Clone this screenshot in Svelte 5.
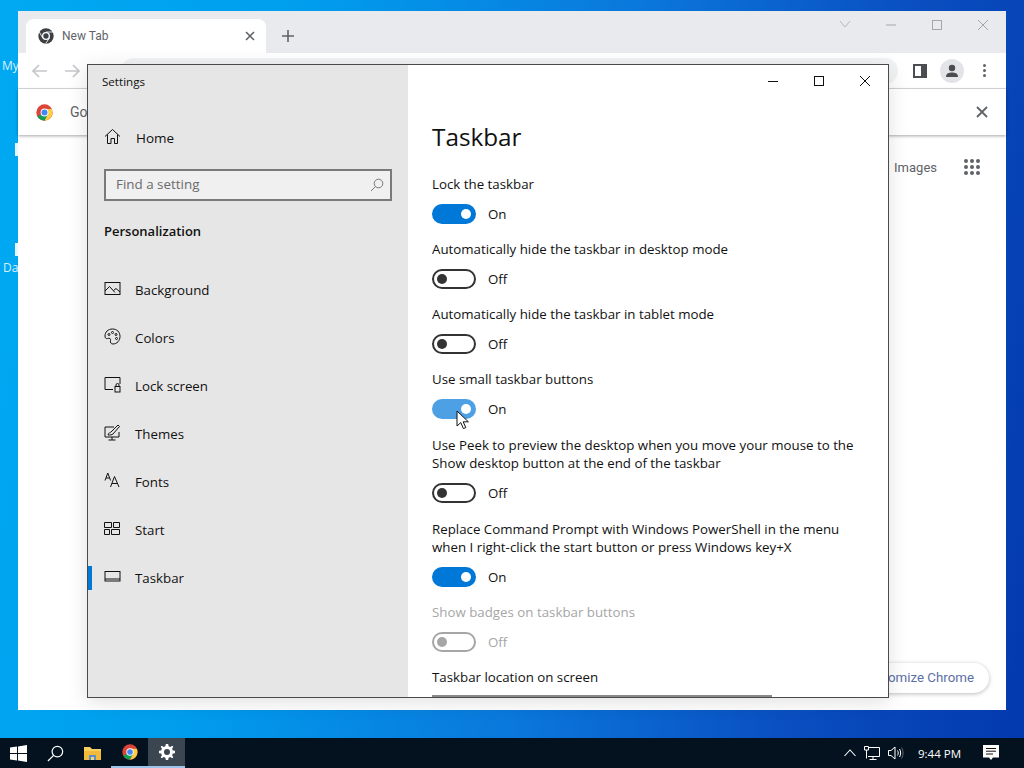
<script>
  const nav = [
    { label: 'Background', icon: 'bg' },
    { label: 'Colors', icon: 'colors' },
    { label: 'Lock screen', icon: 'lock' },
    { label: 'Themes', icon: 'themes' },
    { label: 'Fonts', icon: 'fonts' },
    { label: 'Start', icon: 'start' },
    { label: 'Taskbar', icon: 'taskbar', active: true }
  ];

  const options = [
    { label: 'Lock the taskbar', on: true },
    { label: 'Automatically hide the taskbar in desktop mode', on: false },
    { label: 'Automatically hide the taskbar in tablet mode', on: false },
    { label: 'Use small taskbar buttons', on: true, hover: true },
    { label: 'Use Peek to preview the desktop when you move your mouse to the Show desktop button at the end of the taskbar', on: false, wide: true },
    { label: 'Replace Command Prompt with Windows PowerShell in the menu when I right-click the start button or press Windows key+X', on: true },
    { label: 'Show badges on taskbar buttons', on: false, disabled: true }
  ];
</script>

{#snippet chromeLogo(size)}
  <svg width={size} height={size} viewBox="0 0 48 48">
    <circle cx="24" cy="24" r="23" fill="#db4437" />
    <path d="M24 24 L4 35.5 A23 23 0 0 0 24 47 L36 27 Z" fill="#0f9d58" />
    <path d="M24 14 H44 A23 23 0 0 1 24 47 L34 29 Z" fill="#ffcd40" />
    <circle cx="24" cy="24" r="11" fill="#fff" />
    <circle cx="24" cy="24" r="8.5" fill="#4285f4" />
  </svg>
{/snippet}

<div class="desktop">
  <span class="desk-label my">My</span>
  <span class="desk-label da">Da</span>
  <i class="desk-mark one"></i>
  <i class="desk-mark two"></i>

  <!-- browser behind -->
  <section class="chrome">
    <div class="tabstrip">
      <div class="tab">
        <svg class="favicon" width="16" height="16" viewBox="0 0 48 48">
          <circle cx="24" cy="24" r="23" fill="#3c4043" />
          <circle cx="24" cy="24" r="12" fill="#fff" />
          <circle cx="24" cy="24" r="8" fill="#3c4043" />
          <path d="M24 12 H45 M14 30 L4 12 M34 30 L23 47" stroke="#fff" stroke-width="2.5" />
        </svg>
        <span class="tab-title">New Tab</span>
        <svg class="tab-close" width="10" height="10" viewBox="0 0 10 10"><path d="M1 1 L9 9 M9 1 L1 9" stroke="#5f6368" stroke-width="1.6" /></svg>
      </div>
      <svg class="new-tab" width="14" height="14" viewBox="0 0 14 14"><path d="M7 1 V13 M1 7 H13" stroke="#5f6368" stroke-width="1.6" /></svg>
      <div class="chrome-controls">
        <svg width="46" height="14" viewBox="0 0 46 14"><path d="M18 3 L23 9 L28 3" fill="none" stroke="#b4b6b9" /></svg>
        <svg width="46" height="14" viewBox="0 0 46 14"><path d="M18 7 H28" stroke="#a4a6a9" /></svg>
        <svg width="46" height="14" viewBox="0 0 46 14"><rect x="18.5" y="2.5" width="9" height="9" fill="none" stroke="#a4a6a9" /></svg>
        <svg width="46" height="14" viewBox="0 0 46 14"><path d="M18 2 L28 12 M28 2 L18 12" stroke="#a4a6a9" /></svg>
      </div>
    </div>
    <div class="toolbar">
      <svg width="18" height="16" viewBox="0 0 18 16"><path d="M16 8 H2 M8 2 L2 8 L8 14" fill="none" stroke="#c4c6c9" stroke-width="1.7" /></svg>
      <svg width="18" height="16" viewBox="0 0 18 16"><path d="M2 8 H16 M10 2 L16 8 L10 14" fill="none" stroke="#c4c6c9" stroke-width="1.7" /></svg>
      <div class="omnibox"></div>
      <svg class="panel-icon" width="14" height="14" viewBox="0 0 14 14"><path d="M0 0 H14 V14 H0 Z M2 2 V12 H8 V2 Z" fill="#4b4d50" fill-rule="evenodd" /></svg>
      <div class="avatar">
        <svg width="14" height="14" viewBox="0 0 14 14"><circle cx="7" cy="4" r="3.2" fill="#494c50" /><path d="M1 13 C1 9 4 8.4 7 8.4 C10 8.4 13 9 13 13 Z" fill="#494c50" /></svg>
      </div>
      <div class="dots"><i></i><i></i><i></i></div>
    </div>
    <div class="infobar">
      {@render chromeLogo(17)}
      <span class="info-text">Go</span>
      <svg class="info-close" width="12" height="12" viewBox="0 0 12 12"><path d="M1 1 L11 11 M11 1 L1 11" stroke="#5f6368" stroke-width="1.8" /></svg>
    </div>
    <div class="ntp">
      <div class="ntp-top">
        <span class="images">Images</span>
        <div class="apps">
          {#each Array(9) as _}<i></i>{/each}
        </div>
      </div>
      <div class="customize">Customize Chrome</div>
    </div>
  </section>

  <!-- settings window -->
  <section class="settings">
    <aside class="sidebar">
      <div class="win-title">Settings</div>
      <div class="home">
        <svg class="nav-icon" width="17" height="17" viewBox="0 0 17 17" fill="none" stroke="#111"><path d="M1 8.5 L8.5 1.5 L16 8.5 M3.5 6.5 V15.5 H7 V10.5 H10.5 V15.5 H13.5 V6.5" /></svg>
        <span>Home</span>
      </div>
      <div class="search">
        <span>Find a setting</span>
        <svg width="14" height="14" viewBox="0 0 14 14" fill="none" stroke="#777"><circle cx="8.5" cy="5.5" r="4.3" /><path d="M5.5 8.5 L1 13" /></svg>
      </div>
      <h2>Personalization</h2>
      <nav>
        {#each nav as item}
          <div class="nav-item" class:active={item.active}>
            <svg class="nav-icon" width="17" height="17" viewBox="0 0 17 17" fill="none" stroke="#111">
              {#if item.icon === 'bg'}
                <rect x="1" y="2.5" width="15" height="12" />
                <path d="M1 11 L5.5 6.5 L11 12.5 M9.5 10.5 L12 8.5 L16 12" />
              {:else if item.icon === 'colors'}
                <path d="M8.5 1 C4 1 1 4 1 8 C1 10 2 11 3.5 10.5 C5.5 9.8 7 10.5 6.5 12.5 C6 14.5 7 16 9 16 C13 16 16 12.5 16 8.5 C16 4 13 1 8.5 1 Z" />
                <circle cx="5" cy="6.5" r="1" /><circle cx="8.5" cy="4.5" r="1" /><circle cx="12" cy="6.5" r="1" /><circle cx="12.5" cy="10.5" r="1" />
              {:else if item.icon === 'lock'}
                <path d="M9 13.5 H1 V1.5 H16 V8" />
                <rect x="11" y="10.5" width="5" height="5.5" />
                <path d="M12 10.5 V9 A1.5 1.5 0 0 1 15 9 V10.5" />
              {:else if item.icon === 'themes'}
                <path d="M10 3 H1 V13 H15 V8 M8 13 V16 M4.5 16 H11.5" />
                <path d="M4 11 C5 8 6 9 7 8 L14 1 L15.5 2.5 L9 10 C8 11 6 11 4 11 Z" />
              {:else if item.icon === 'fonts'}
                <path d="M1 8.5 L3.8 1 L6.6 8.5 M2 6 H5.6 M6.5 15 L10.5 4.5 L15 15 M8 11.5 H13.5" />
              {:else if item.icon === 'start'}
                <path d="M.5 2.5 H7.5 V7.5 H.5 Z M9.5 2.5 H15.5 V7.5 H9.5 Z M.5 9.5 H5.5 V14.5 H.5 Z M7.5 9.5 H15.5 V14.5 H7.5 Z" />
              {:else}
                <rect x="1" y="3.5" width="15" height="9.5" />
                <path d="M1 11 H16" />
              {/if}
            </svg>
            <span>{item.label}</span>
          </div>
        {/each}
      </nav>
    </aside>

    <main class="content">
      <div class="controls">
        <button aria-label="Minimize"><svg width="12" height="12" viewBox="0 0 12 12"><path d="M1 6.5 H11" stroke="#111" /></svg></button>
        <button aria-label="Maximize"><svg width="12" height="12" viewBox="0 0 12 12"><rect x="1.5" y="1.5" width="9" height="9" fill="none" stroke="#111" /></svg></button>
        <button aria-label="Close"><svg width="12" height="12" viewBox="0 0 12 12"><path d="M1 1 L11 11 M11 1 L1 11" stroke="#111" /></svg></button>
      </div>
      <h1>Taskbar</h1>
      {#each options as opt}
        <div class="option" class:disabled={opt.disabled} class:wide={opt.wide}>
          <p>{opt.label}</p>
          <div class="toggle-row">
            <span class="toggle" class:on={opt.on} class:hover={opt.hover}><i></i></span>
            <span class="state">{opt.on ? 'On' : 'Off'}</span>
            {#if opt.hover}
              <svg class="cursor" width="14" height="20" viewBox="0 0 14 20"><path d="M1 1 V16 L4.8 12.6 L7.4 18.6 L9.8 17.6 L7.2 11.8 H12.4 Z" fill="#fff" stroke="#111" /></svg>
            {/if}
          </div>
        </div>
      {/each}
      <p class="location">Taskbar location on screen</p>
      <div class="dropdown"></div>
    </main>
  </section>

  <footer class="taskbar">
    <div class="tb-item">
      <svg width="17" height="17" viewBox="0 0 17 17" fill="#fff"><path d="M0 2.6 L7 1.6 V8 H0 Z M8 1.4 L17 0 V8 H8 Z M0 9 H7 V15.4 L0 14.4 Z M8 9 H17 V17 L8 15.6 Z" /></svg>
    </div>
    <div class="tb-item">
      <svg width="17" height="17" viewBox="0 0 18 18" fill="none" stroke="#fff" stroke-width="1.3"><circle cx="11" cy="7" r="5.6" /><path d="M7 11 L1 17" /></svg>
    </div>
    <div class="tb-item">
      <svg width="17" height="15" viewBox="0 0 17 15"><path d="M0 1 H6 L8 3 H17 V14 H0 Z" fill="#f6cf5d" /><path d="M0 5 H17 V14 H0 Z" fill="#f2b93a" /><rect x="5" y="9" width="7" height="5" fill="#5c8fc4" /><rect x="7" y="11" width="3" height="3" fill="#f2d48a" /></svg>
    </div>
    <div class="tb-item running">{@render chromeLogo(16)}</div>
    <div class="tb-item running current">
      <svg width="16" height="16" viewBox="0 0 16 16"><path d="M6.8 0 H9.2 L9.6 2.2 L11.3 2.9 L13.2 1.7 L14.3 2.8 L13.1 4.7 L13.8 6.4 L16 6.8 V9.2 L13.8 9.6 L13.1 11.3 L14.3 13.2 L13.2 14.3 L11.3 13.1 L9.6 13.8 L9.2 16 H6.8 L6.4 13.8 L4.7 13.1 L2.8 14.3 L1.7 13.2 L2.9 11.3 L2.2 9.6 L0 9.2 V6.8 L2.2 6.4 L2.9 4.7 L1.7 2.8 L2.8 1.7 L4.7 2.9 L6.4 2.2 Z M8 5 A3 3 0 1 0 8 11 A3 3 0 1 0 8 5 Z" fill="#fff" fill-rule="evenodd" /></svg>
    </div>
    <div class="tray">
      <svg width="12" height="8" viewBox="0 0 12 8" fill="none" stroke="#fff" stroke-width="1.1"><path d="M.5 7 L6 1 L11.5 7" /></svg>
      <svg width="16" height="14" viewBox="0 0 16 14" fill="none" stroke="#fff"><path d="M4 1.5 H15.5 V10.5 H4 M9 10.5 V13 M5.5 13.5 H12.5 M.5 .5 H4.5 V4 H.5 Z M2.5 4 V12.5" /></svg>
      <svg width="16" height="14" viewBox="0 0 16 14" fill="none" stroke="#fff"><path d="M.5 4.5 H3 L7 1 V13 L3 9.5 H.5 Z M9.5 4.5 C10.5 6 10.5 8 9.5 9.5 M11.5 3 C13 5.5 13 8.5 11.5 11" /><path d="M13.5 1.5 C15.6 5 15.6 9 13.5 12.5" stroke="#666" /></svg>
      <span class="clock">9:44 PM</span>
      <svg class="notif" width="16" height="16" viewBox="0 0 16 16"><path d="M0 0 H16 V12.5 H10 L8 15 L6 12.5 H0 Z" fill="#fff" /><path d="M3 3.5 H13 M3 6.2 H13 M3 9 H10" stroke="#111" /></svg>
    </div>
  </footer>
</div>

<style>
  :global(body) {
    margin: 0;
    overflow: hidden;
  }
  .desktop {
    position: relative;
    width: 1024px;
    height: 768px;
    overflow: hidden;
    background: linear-gradient(100deg, #00a9f2 0%, #009fee 25%, #0a78dc 55%, #0a50c2 78%, #0338ae 100%);
    font-family: "Open Sans", "Noto Sans", sans-serif;
  }
  .desk-label {
    position: absolute;
    color: #d8f1ff;
    font-size: 12px;
    line-height: 14px;
  }
  .my { left: 2px; top: 59px; }
  .da { left: 3px; top: 261px; }
  .desk-mark {
    position: absolute;
    left: 15px;
    width: 3px;
    height: 13px;
    background: #e8f6ff;
  }
  .desk-mark.one { top: 143px; }
  .desk-mark.two { top: 243px; }

  /* chrome */
  .chrome {
    position: absolute;
    left: 18px;
    top: 11px;
    width: 988px;
    height: 699px;
    background: #fff;
    display: flex;
    flex-direction: column;
    font-family: Roboto, sans-serif;
  }
  .tabstrip {
    height: 42px;
    background: #e8eaed;
    display: flex;
    align-items: flex-end;
    padding-left: 8px;
  }
  .tab {
    width: 240px;
    height: 34px;
    box-sizing: border-box;
    background: #fff;
    border-radius: 8px 8px 0 0;
    display: flex;
    align-items: center;
    padding: 0 11px 0 12px;
    gap: 8px;
  }
  .favicon { flex: none; }
  .tab-title {
    flex: 1;
    font-size: 12px;
    color: #5f6368;
  }
  .new-tab {
    margin: 0 0 10px 15px;
  }
  .chrome-controls {
    margin-left: auto;
    align-self: flex-start;
    margin-top: 7px;
    display: flex;
  }
  .toolbar {
    height: 36px;
    box-sizing: border-box;
    border-bottom: 1px solid #dadce0;
    display: flex;
    align-items: center;
    padding-left: 13px;
    gap: 14px;
  }
  .omnibox {
    flex: 1;
    height: 26px;
    margin-left: 26px;
    margin-right: 1px;
    background: #f1f3f4;
    border-radius: 13px;
  }
  .panel-icon { margin-right: -1px; }
  .avatar {
    width: 24px;
    height: 24px;
    border-radius: 50%;
    background: #e3e4e8;
    display: flex;
    align-items: center;
    justify-content: center;
  }
  .dots {
    display: flex;
    flex-direction: column;
    gap: 2px;
    margin: 0 18px 0 3px;
    padding: 0 2px;
  }
  .dots i {
    width: 3px;
    height: 3px;
    border-radius: 50%;
    background: #5f6368;
  }
  .infobar {
    height: 46px;
    box-sizing: border-box;
    background: #fff;
    display: flex;
    align-items: center;
    padding: 0 18px;
    box-shadow: 0 1px 3px rgba(0, 0, 0, 0.35);
    position: relative;
  }
  .info-text {
    margin-left: 17px;
    font-size: 14px;
    color: #5f6368;
  }
  .info-close { margin-left: auto; }
  .ntp {
    flex: 1;
    display: flex;
    flex-direction: column;
    align-items: flex-end;
    justify-content: space-between;
    padding: 24px 17px 17px 0;
  }
  .ntp-top {
    display: flex;
    align-items: center;
    gap: 27px;
    padding-right: 9px;
  }
  .images {
    font-size: 13px;
    color: #5f6368;
  }
  .apps {
    display: grid;
    grid-template-columns: repeat(3, 4px);
    gap: 2px;
  }
  .apps i {
    width: 4px;
    height: 4px;
    border-radius: 50%;
    background: #5f6368;
  }
  .customize {
    height: 30px;
    line-height: 30px;
    padding: 0 15px;
    background: #fff;
    border-radius: 15px;
    box-shadow: 0 1px 4px rgba(60, 64, 67, 0.35);
    font-size: 13.3px;
    color: #5b6fa6;
    white-space: nowrap;
  }

  /* settings */
  .settings {
    position: absolute;
    left: 87px;
    top: 64px;
    width: 802px;
    height: 634px;
    box-sizing: border-box;
    border: 1px solid #4a4a4a;
    background: #fff;
    display: flex;
    overflow: hidden;
    color: #111;
    font-size: 13.3px;
    box-shadow: 0 4px 20px rgba(0, 0, 0, 0.12);
  }
  .sidebar {
    width: 320px;
    flex: none;
    background: #e6e6e6;
    box-sizing: border-box;
    padding: 0 16px;
  }
  .win-title {
    margin: 8px 0 0 -2px;
    font-size: 11.6px;
    line-height: 18px;
  }
  .home {
    display: flex;
    align-items: center;
    gap: 15px;
    height: 20px;
    margin-top: 37px;
    font-size: 13.5px;
  }
  .search {
    margin-top: 21px;
    height: 32px;
    box-sizing: border-box;
    border: 2px solid #7a7a7a;
    background: #f0f0f0;
    display: flex;
    align-items: center;
    justify-content: space-between;
    padding: 0 6px 2px 10px;
    color: #6b6b6b;
    font-size: 13.4px;
  }
  .search svg { margin-top: 2px; }
  h2 {
    margin: 20px 0 0;
    font-size: 13px;
    line-height: 20px;
    font-weight: 600;
  }
  nav {
    margin-top: 25px;
  }
  .nav-item {
    position: relative;
    height: 48px;
    display: flex;
    align-items: center;
    gap: 14px;
    font-size: 13.3px;
  }
  .nav-item.active::before {
    content: "";
    position: absolute;
    left: -16px;
    top: 12px;
    width: 4px;
    height: 24px;
    background: #0078d7;
  }
  .nav-icon { flex: none; margin-top: -3px; }
  .content {
    flex: 1;
    padding-left: 24px;
    min-width: 0;
  }
  .controls {
    display: flex;
    justify-content: flex-end;
    height: 32px;
  }
  .controls button {
    width: 46px;
    height: 32px;
    border: 0;
    padding: 0;
    background: none;
    display: flex;
    align-items: center;
    justify-content: center;
  }
  h1 {
    margin: 22px 0 20px;
    font-size: 24.3px;
    line-height: 36px;
    font-weight: 400;
  }
  .option { margin-bottom: 16px; }
  .option.wide { margin-top: 17px; margin-bottom: 17px; }
  .option p, .location {
    margin: 0;
    max-width: 430px;
    font-size: 13.3px;
    line-height: 18px;
  }
  .toggle-row {
    position: relative;
    margin-top: 10px;
    height: 21px;
    display: flex;
    align-items: center;
    gap: 12px;
  }
  .toggle {
    width: 44px;
    height: 20px;
    box-sizing: border-box;
    border: 2px solid #333;
    border-radius: 10px;
    display: flex;
    align-items: center;
    padding: 0 3px;
  }
  .toggle i {
    width: 10px;
    height: 10px;
    border-radius: 50%;
    background: #333;
  }
  .toggle.on {
    background: #0078d7;
    border-color: #0078d7;
    justify-content: flex-end;
  }
  .toggle.on i { background: #fff; }
  .toggle.hover {
    background: #4da0e3;
    border-color: #4da0e3;
  }
  .disabled { color: #a6a6a6; }
  .disabled .toggle { border-color: #a6a6a6; }
  .disabled .toggle i { background: #a6a6a6; }
  .cursor {
    position: absolute;
    left: 24px;
    top: 12px;
  }
  .dropdown {
    margin-top: 9px;
    width: 340px;
    height: 32px;
    box-sizing: border-box;
    border: 2px solid #8a8a8a;
  }

  /* taskbar */
  .taskbar {
    position: absolute;
    left: 0;
    right: 0;
    bottom: 0;
    height: 30px;
    background: #04121f;
    display: flex;
    align-items: stretch;
  }
  .tb-item {
    width: 37px;
    display: flex;
    align-items: center;
    justify-content: center;
    box-sizing: border-box;
  }
  .tb-item.running { border-bottom: 2px solid #9cc4ea; }
  .tb-item.current { background: #3b4650; }
  .tray {
    margin-left: auto;
    display: flex;
    align-items: center;
    gap: 8px;
    color: #fff;
    font-size: 11.5px;
    padding-right: 25px;
  }
  .clock { margin: 0 14px 0 6px; }
</style>
